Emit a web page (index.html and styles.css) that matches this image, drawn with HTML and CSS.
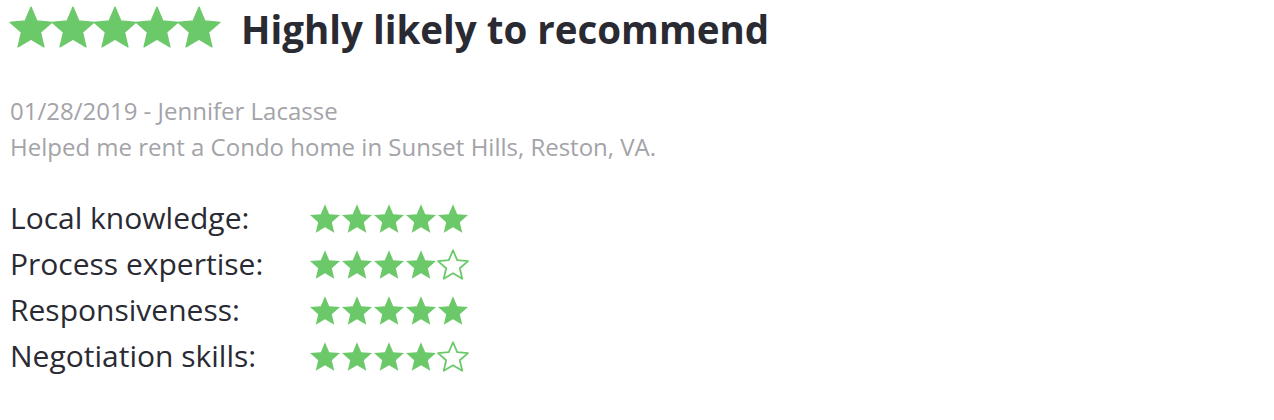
FILE: index.html
```html
<!DOCTYPE html>
<html>
<head>
<meta charset="utf-8">
<link rel="stylesheet" href="styles.css">
</head>
<body>
<svg width="0" height="0" class="defs">
  <defs>
    <path id="star" d="M12 17.27L18.18 21l-1.64-7.03L22 9.24l-7.19-.61L12 2 9.19 8.63 2 9.24l5.46 4.73L5.82 21z"/>
  </defs>
</svg>
<div class="review">
  <div class="headline">
    <div class="stars big">
      <svg viewBox="2 2 20 19"><use href="#star"/></svg>
      <svg viewBox="2 2 20 19"><use href="#star"/></svg>
      <svg viewBox="2 2 20 19"><use href="#star"/></svg>
      <svg viewBox="2 2 20 19"><use href="#star"/></svg>
      <svg viewBox="2 2 20 19"><use href="#star"/></svg>
    </div>
    <h1 class="title">Highly likely to recommend</h1>
  </div>
  <div class="meta">
    <div>01/28/2019 - Jennifer Lacasse</div>
    <div>Helped me rent a Condo home in Sunset Hills, Reston, VA.</div>
  </div>
  <div class="ratings">
    <div class="label">Local knowledge:</div>
    <div class="stars small">
      <svg viewBox="2 2 20 19"><use href="#star"/></svg>
      <svg viewBox="2 2 20 19"><use href="#star"/></svg>
      <svg viewBox="2 2 20 19"><use href="#star"/></svg>
      <svg viewBox="2 2 20 19"><use href="#star"/></svg>
      <svg viewBox="2 2 20 19"><use href="#star"/></svg>
    </div>
    <div class="label">Process expertise:</div>
    <div class="stars small">
      <svg viewBox="2 2 20 19"><use href="#star"/></svg>
      <svg viewBox="2 2 20 19"><use href="#star"/></svg>
      <svg viewBox="2 2 20 19"><use href="#star"/></svg>
      <svg viewBox="2 2 20 19"><use href="#star"/></svg>
      <svg viewBox="2 2 20 19" class="empty"><use href="#star"/></svg>
    </div>
    <div class="label">Responsiveness:</div>
    <div class="stars small">
      <svg viewBox="2 2 20 19"><use href="#star"/></svg>
      <svg viewBox="2 2 20 19"><use href="#star"/></svg>
      <svg viewBox="2 2 20 19"><use href="#star"/></svg>
      <svg viewBox="2 2 20 19"><use href="#star"/></svg>
      <svg viewBox="2 2 20 19"><use href="#star"/></svg>
    </div>
    <div class="label">Negotiation skills:</div>
    <div class="stars small">
      <svg viewBox="2 2 20 19"><use href="#star"/></svg>
      <svg viewBox="2 2 20 19"><use href="#star"/></svg>
      <svg viewBox="2 2 20 19"><use href="#star"/></svg>
      <svg viewBox="2 2 20 19"><use href="#star"/></svg>
      <svg viewBox="2 2 20 19" class="empty"><use href="#star"/></svg>
    </div>
  </div>
</div>
</body>
</html>
```
FILE: styles.css
```css
html, body {
  margin: 0;
  padding: 0;
  background: #ffffff;
}
body {
  font-family: "Open Sans", "Liberation Sans", sans-serif;
  color: #2a2a33;
}
.defs {
  position: absolute;
  width: 0;
  height: 0;
}
.review {
  padding: 5px 10px 0 10px;
}
.headline {
  display: flex;
  align-items: center;
  gap: 21px;
}
.stars {
  display: flex;
}
.stars svg {
  fill: #6cc96a;
  overflow: visible;
}
.stars svg.empty {
  fill: #ffffff;
  stroke: #6cc96a;
  stroke-width: 1.2px;
  stroke-linejoin: round;
}
.stars.big svg {
  width: 42px;
  height: 40px;
  stroke: #6cc96a;
  stroke-width: 0.6px;
  stroke-linejoin: round;
}
.title {
  margin: 0;
  font-size: 38.5px;
  font-weight: 700;
  line-height: 44px;
  color: #2a2a33;
  position: relative;
  top: 2px;
}
.meta {
  margin-top: 44px;
  font-size: 24px;
  line-height: 36px;
  color: #a3a3a8;
}
.ratings {
  margin-top: 30px;
  display: grid;
  grid-template-columns: 300px auto;
  justify-content: start;
}
.label {
  font-size: 30px;
  line-height: 46px;
  color: #2a2a33;
}
.stars.small {
  align-items: center;
  gap: 2px;
}
.stars.small svg {
  width: 30px;
  height: 29px;
}
```
